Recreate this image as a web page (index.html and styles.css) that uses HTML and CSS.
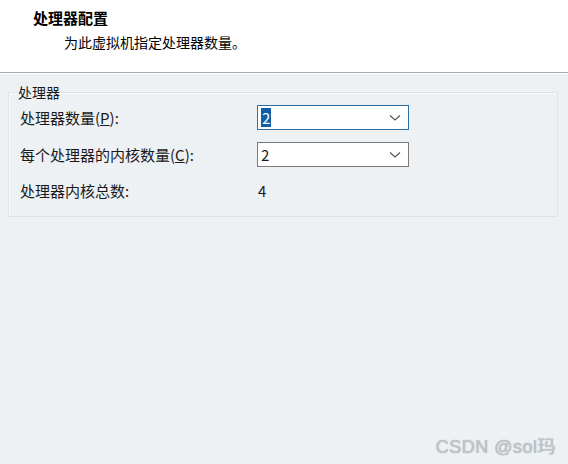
FILE: index.html
```html
<!DOCTYPE html>
<html lang="zh-CN">
<head>
<meta charset="UTF-8">
<title>处理器配置</title>
<link rel="stylesheet" href="styles.css">
</head>
<body>
<div class="header">
    <div class="title">处理器配置</div>
    <div class="subtitle">为此虚拟机指定处理器数量。</div>
</div>
<div class="main">
    <fieldset class="group">
        <legend>处理器</legend>
        <div class="row">
            <span class="label">处理器数量(<u>P</u>):</span>
            <div class="combo focused">
                <span class="value sel">2</span>
                <svg class="arrow" width="12" height="8" viewBox="0 0 12 8"><path d="M1 1.5 L6 6 L11 1.5" fill="none" stroke="#555" stroke-width="1.2"/></svg>
            </div>
        </div>
        <div class="row">
            <span class="label">每个处理器的内核数量(<u>C</u>):</span>
            <div class="combo">
                <span class="value">2</span>
                <svg class="arrow" width="12" height="8" viewBox="0 0 12 8"><path d="M1 1.5 L6 6 L11 1.5" fill="none" stroke="#555" stroke-width="1.2"/></svg>
            </div>
        </div>
        <div class="row">
            <span class="label">处理器内核总数:</span>
            <span class="total">4</span>
        </div>
    </fieldset>
    <div class="watermark">CSDN @sol玛</div>
</div>
</body>
</html>
```

FILE: styles.css
```css
body {
    margin: 0;
    width: 568px;
    height: 464px;
    font-family: "Noto Sans CJK SC", "Liberation Sans", sans-serif;
    font-size: 15px;
    color: #1a1a1a;
    background-color: #edf1f4;
    overflow: hidden;
}
.header {
    height: 73px;
    background-color: #fff;
    border-bottom: 1px solid #a9a9a9;
    box-shadow: 0 1px 0 #fdfdfd;
    box-sizing: border-box;
    padding: 7px 0 0 33px;
}
.title {
    font-size: 15px;
    font-weight: bold;
    line-height: 22px;
    color: #000;
}
.subtitle {
    font-size: 14px;
    line-height: 22px;
    padding-left: 31px;
    margin-top: 2px;
    color: #000;
}
.main {
    position: relative;
    height: 391px;
    padding: 10px 10px 0 8px;
}
.group {
    margin: 0;
    padding: 0 0 0 11px;
    border: 1px solid #dde3e7;
    box-shadow: inset 1px 1px 0 #f8fafb;
    height: 134px;
    box-sizing: border-box;
    width: 550px;
}
.group legend {
    padding: 0;
    margin-left: -2px;
    margin-bottom: -2px;
    font-size: 14px;
    line-height: 18px;
}
.row {
    display: flex;
    align-items: center;
    height: 37px;
}
.row:last-child {
    height: 34px;
}
.label {
    width: 237px;
    flex: none;
}
.label u {
    text-decoration: underline;
}
.combo {
    width: 152px;
    height: 25px;
    box-sizing: border-box;
    border: 1px solid #7a7a7a;
    background-color: #fff;
    display: flex;
    align-items: center;
    justify-content: space-between;
    padding: 0 7px 0 3px;
    font-size: 15px;
}
.combo.focused {
    border-color: #2e6fa6;
}
.value.sel {
    background-color: #0f5ea8;
    color: #fff;
    padding: 0 1px;
    line-height: 19px;
}
.total {
    font-size: 15px;
    padding-left: 1px;
}
.watermark {
    position: absolute;
    right: 12px;
    bottom: 16px;
    font-family: "Liberation Sans", "Noto Sans CJK SC", sans-serif;
    font-size: 18px;
    letter-spacing: 0.5px;
    color: #c4c8cb;
    text-shadow: 0 0 1px #8a8d90;
}
```
